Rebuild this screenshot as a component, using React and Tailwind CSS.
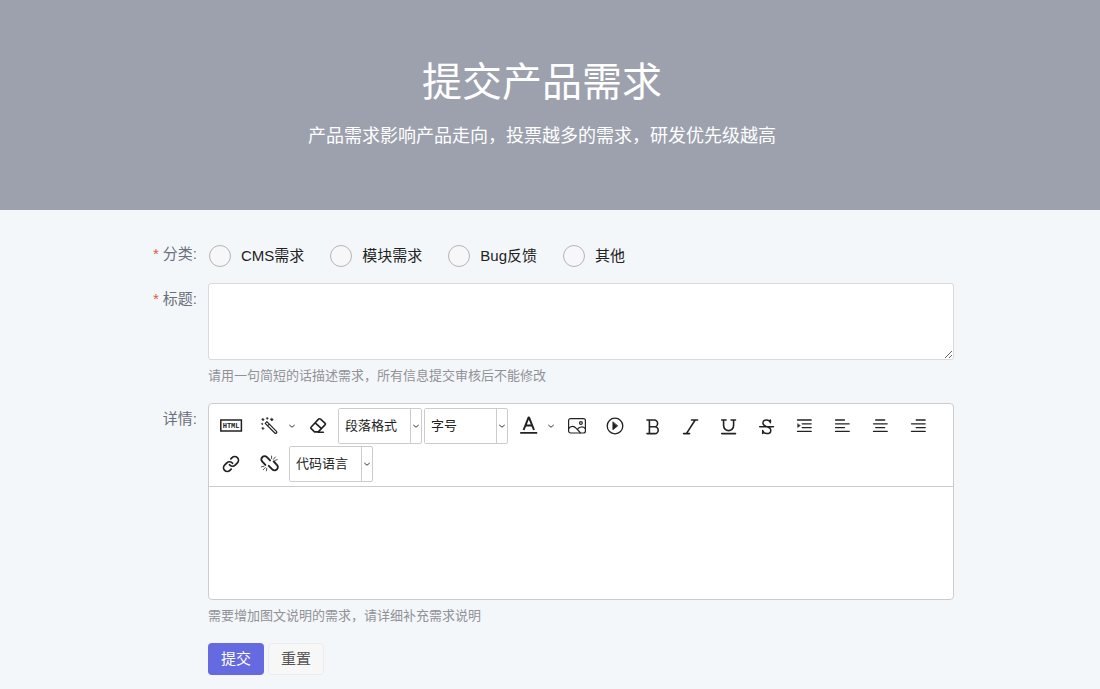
import React from "react";
import { Link } from "lucide-react";

function Icon({ children, width = "1.6" }) {
  return (
    <svg
      viewBox="0 0 24 24"
      className="size-6"
      fill="none"
      stroke="currentColor"
      strokeWidth={width}
      strokeLinecap="round"
      strokeLinejoin="round"
      aria-hidden="true"
    >
      {children}
    </svg>
  );
}

function Caret() {
  return (
    <svg viewBox="0 0 8 8" className="size-2" fill="none" stroke="currentColor" strokeWidth=".9" aria-hidden="true">
      <path d="M1.3 3 4 5.2 6.7 3" />
    </svg>
  );
}

function Tool({ label, children }) {
  return (
    <button type="button" aria-label={label} className="flex h-[38px] w-[38px] items-center justify-center">
      {children}
    </button>
  );
}

function CaretButton({ label }) {
  return (
    <button type="button" aria-label={label} className="flex h-[38px] w-[11px] items-center justify-start">
      <Caret />
    </button>
  );
}

function ToolSelect({ label }) {
  return (
    <div className="mx-px my-px flex h-9 w-[84px] items-stretch rounded-xs border border-[#cccccc] bg-white">
      <select aria-label={label} className="min-w-0 flex-1 appearance-none bg-white pl-1.5 text-[13px] text-[#222222] outline-none">
        <option>{label}</option>
      </select>
      <span className="flex w-[11px] items-center justify-center border-l border-[#cccccc]">
        <Caret />
      </span>
    </div>
  );
}

const alignments = [
  ["左对齐", "M4.5 6h9M4.5 9.8h13.7M4.5 13.6h9M4.5 17.4h13.7"],
  ["居中对齐", "M6.7 6h9M4.5 9.8h13.7M6.7 13.6h9M4.5 17.4h13.7"],
  ["右对齐", "M9.2 6h9M4.5 9.8h13.7M9.2 13.6h9M4.5 17.4h13.7"],
];

function Toolbar() {
  return (
    <div className="flex flex-wrap border-b border-[#cccccc] p-[3px] text-[#222222]">
      <Tool label="HTML">
        <svg viewBox="0 0 24 24" className="size-6" aria-hidden="true">
          <rect x="1.8" y="6" width="20.6" height="11" fill="none" stroke="currentColor" strokeWidth="1.5" />
          <text x="12.1" y="14.2" textAnchor="middle" fontSize="7" fontWeight="700" fontFamily="Liberation Mono, monospace" fill="currentColor">
            HTML
          </text>
        </svg>
      </Tool>
      <Tool label="自动排版">
        <Icon width="1.2">
          <path d="M8.2 9.4 9.9 7.7 19.5 17.3a1.1 1.1 0 0 1-1.7 1.7ZM10.6 11.8l1.7-1.7" />
          <path
            d="M6 4.4 7.2 5.6 6 6.8 4.8 5.6ZM10.3 3.6l.9.9-.9.9-.9-.9ZM14.8 4.2 16.2 5.6 14.8 7 13.4 5.6ZM5.3 9.2l.8.8-.8.8-.8-.8ZM6 13.4l1.1 1.1L6 15.6l-1.1-1.1Z"
            fill="currentColor"
            strokeWidth=".6"
          />
        </Icon>
      </Tool>
      <CaretButton label="排版选项" />
      <Tool label="清除格式">
        <Icon width="1.6">
          <path d="M12.3 5.4 5 13.2a.9.9 0 0 0 0 1.2l3.5 3.5h3.7l7-7.3a.9.9 0 0 0 0-1.2l-4.6-4.2a1.5 1.5 0 0 0-2.3.2ZM9.2 8.8l6 5.5M12 18.2h5.4" />
        </Icon>
      </Tool>
      <ToolSelect label="段落格式" />
      <ToolSelect label="字号" />
      <Tool label="字体颜色">
        <Icon>
          <path d="M7.6 16 12.6 3.4h.4L18 16M9.4 11.6h6.8" strokeWidth="2" strokeLinecap="butt" />
          <path d="M4.2 18.9h17" strokeWidth="1.8" strokeLinecap="butt" />
        </Icon>
      </Tool>
      <CaretButton label="颜色选项" />
      <Tool label="图片">
        <Icon width="1.2">
          <rect x="3.6" y="4.6" width="16.8" height="14.4" rx="2" />
          <circle cx="15.9" cy="9" r="1.4" />
          <path d="M3.6 14.6c2-2.8 5.4-3 7.4-.4 2 2.4 3.6 3 4.3 4.8M12.4 15.4c1.8-2.9 5.6-3.2 8-.9" />
        </Icon>
      </Tool>
      <Tool label="视频">
        <Icon width="1.3">
          <circle cx="12" cy="12" r="7.8" />
          <path d="M9.9 8.2v7.6l4.6-3.8Z" fill="currentColor" strokeWidth=".8" />
        </Icon>
      </Tool>
      <Tool label="加粗">
        <Icon>
          <path d="M6 6h7.2a3.4 3.4 0 0 1 0 6.8H8.4M6 19.6h7.8a3.4 3.4 0 0 0 0-6.8M8.4 6v13.6" />
        </Icon>
      </Tool>
      <Tool label="斜体">
        <Icon>
          <path d="M12.6 6h6M4.6 19.6h6M16.2 6 7.4 19.6" />
        </Icon>
      </Tool>
      <Tool label="下划线">
        <Icon>
          <path d="M4.7 6h4.4M14.1 6h4.4M6.6 6v5.6a5 5 0 0 0 10 0V6M4.7 19.6h13.8" />
        </Icon>
      </Tool>
      <Tool label="删除线">
        <Icon width="1.5">
          <path d="M15.4 8.8V6M15.4 8.6c-.7-1.8-2-2.6-3.8-2.6-2.1 0-3.7 1.3-3.7 3.1 0 2.4 2.2 3 4 3.6 2.2.7 3.9 1.5 3.9 3.7 0 1.9-1.7 3.2-4 3.2-2 0-3.5-1-4.1-2.8M7.7 16.6v3M4.7 12.7h13.8" />
        </Icon>
      </Tool>
      <Tool label="缩进">
        <Icon width="1.3">
          <path d="M4.5 6h13.7M9.2 9.8h9M9.2 13.6h9M4.5 17.4h13.7" />
          <path d="M4.6 9.8v3.8l2.6-1.9Z" fill="currentColor" strokeWidth=".4" />
        </Icon>
      </Tool>
      {alignments.map(([label, d]) => (
        <Tool key={label} label={label}>
          <Icon width="1.3">
            <path d={d} />
          </Icon>
        </Tool>
      ))}
      <Tool label="链接">
        <Link className="size-[18px]" strokeWidth={2.3} />
      </Tool>
      <Tool label="取消链接">
        <Icon>
          <path d="M8.4 12.9 5.3 9.7a3.2 3.2 0 0 1 4.6-4.6l3.2 3.3M11.8 13.8l3.5 3.6a3.2 3.2 0 0 0 4.6-4.6l-3.2-3.3" strokeWidth="1.9" />
          <path d="M14.6 6.6V4M16.4 7.3 18.4 5M17.6 8.6 20.2 7.6M7 14.2l-2.6.7M8.2 15.6l-2 2.2M9.8 16.2l-.4 2.6" strokeWidth=".8" />
        </Icon>
      </Tool>
      <ToolSelect label="代码语言" />
    </div>
  );
}

function FieldLabel({ required, children, ...props }) {
  return (
    <label className="w-[78px] shrink-0 pr-[11px] text-right text-[15px] leading-8 text-[#6b707c]" {...props}>
      {required && <span className="mr-1 text-[#dc5a3c]">*</span>}
      {children}
    </label>
  );
}

function Help({ children }) {
  return <p className="mt-1.5 text-[13px] leading-5 text-[#919196]">{children}</p>;
}

const categories = ["CMS需求", "模块需求", "Bug反馈", "其他"];

export default function App() {
  return (
    <div className="min-h-screen bg-[#f4f7fa] font-['Liberation_Sans','Noto_Sans_CJK_SC',sans-serif]">
      <header className="bg-[#9da1ae] pt-14 pr-4 pb-[60px] text-center text-white">
        <h1 className="text-[40px] leading-[52px]">提交产品需求</h1>
        <p className="mt-3.5 text-lg leading-7">产品需求影响产品走向，投票越多的需求，研发优先级越高</p>
      </header>
      <main className="pt-7 pr-4">
        <form className="mx-auto max-w-[824px]" onSubmit={(e) => e.preventDefault()}>
          <div className="mb-[9px] flex" role="radiogroup" aria-labelledby="category-label">
            <FieldLabel required id="category-label">分类:</FieldLabel>
            <div className="flex h-9 items-center gap-[26px] pl-px text-[15px] text-[#222222]">
              {categories.map((name) => (
                <label key={name} className="flex items-center gap-2.5">
                  <input
                    type="radio"
                    name="category"
                    className="size-[22px] appearance-none rounded-full border border-[#b4b4b8] bg-[#f7f7f9] checked:border-[7px] checked:border-[#656ae0]"
                  />
                  {name}
                </label>
              ))}
            </div>
          </div>
          <div className="mb-[17px] flex">
            <FieldLabel required htmlFor="title">标题:</FieldLabel>
            <div className="min-w-0 flex-1">
              <textarea id="title" className="block h-[77px] w-full resize-y rounded-[3px] border border-[#d9d9de] bg-white p-2 text-[15px] outline-none" />
              <Help>请用一句简短的话描述需求，所有信息提交审核后不能修改</Help>
            </div>
          </div>
          <div className="mb-[17px] flex">
            <FieldLabel htmlFor="detail">详情:</FieldLabel>
            <div className="min-w-0 flex-1">
              <div className="overflow-hidden rounded-[4px] border border-[#cccccc] bg-white">
                <Toolbar />
                <textarea id="detail" className="block h-28 w-full resize-none p-2 text-[15px] outline-none" />
              </div>
              <Help>需要增加图文说明的需求，请详细补充需求说明</Help>
            </div>
          </div>
          <div className="flex gap-1 pl-[78px] text-[15px]">
            <button type="submit" className="h-8 w-14 rounded-[4px] bg-[#656ae0] text-white">提交</button>
            <button type="reset" className="h-8 w-14 rounded-[4px] border border-[#ececee] bg-[#f7f7f7] text-[#555555]">重置</button>
          </div>
        </form>
      </main>
    </div>
  );
}
